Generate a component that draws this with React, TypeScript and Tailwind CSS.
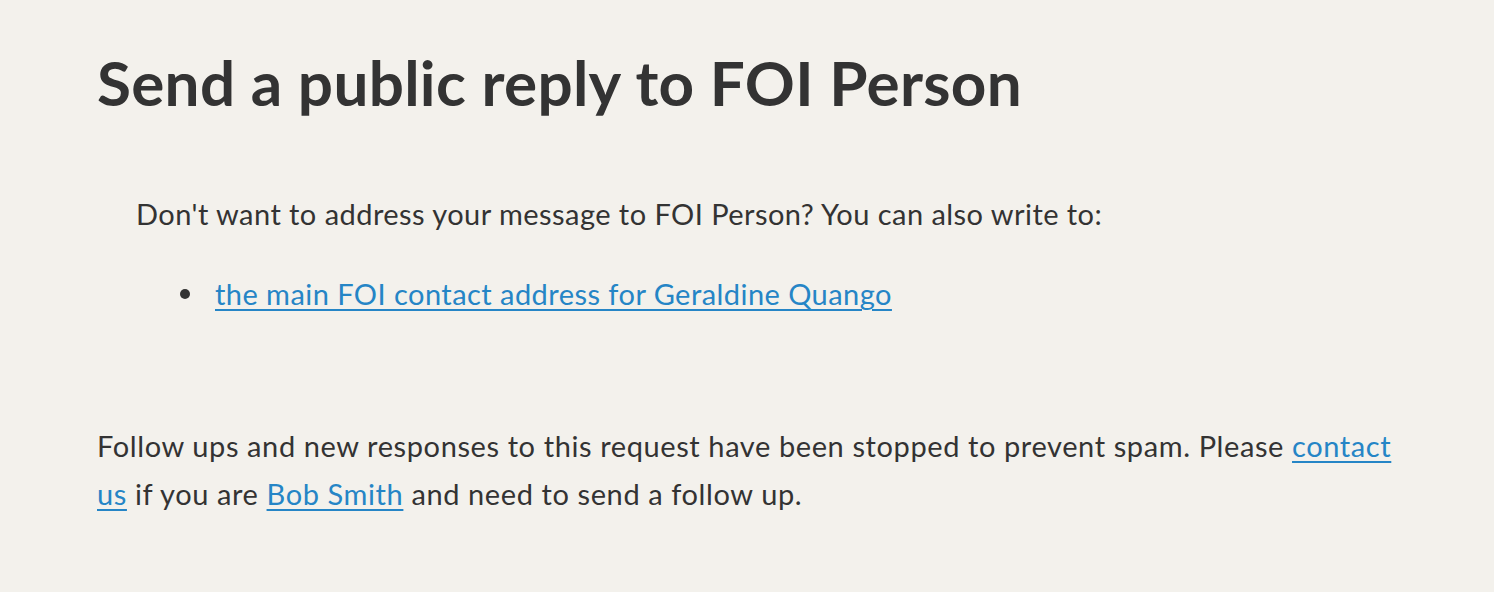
import React from 'react';

const linkCls = 'text-[#2585c6] underline decoration-[2px] underline-offset-[4px]';

const App: React.FC = () => {
  return (
    <div className="min-h-[592px] bg-[#f3f1ec] text-[#333333] font-['Lato',sans-serif]">
      <div className="px-[97px] pt-[45px]">
        {/* Titulo */}
        <h1 className="text-[62px] font-bold leading-[1.2] tracking-[0.3px]">Send a public reply to FOI Person</h1>

        <div className="mt-[71px] ml-[39px] text-[29px] leading-[48px] tracking-[0.45px]">
          <p>Don't want to address your message to FOI Person? You can also write to:</p>
          <ul className="mt-[32px] pl-[44px]">
            <li className="flex items-center">
              <span className="mr-[25px] h-[10px] w-[10px] shrink-0 rounded-full bg-[#333333]" />
              <a href="#" className={linkCls}>the main FOI contact address for Geraldine Quango</a>
            </li>
          </ul>
        </div>

        <p className="mt-[104px] max-w-[1320px] text-[29px] leading-[48px] tracking-[0.6px]">
          Follow ups and new responses to this request have been stopped to prevent spam. Please{' '}
          <a href="#" className={linkCls}>contact us</a> if you are{' '}
          <a href="#" className={linkCls}>Bob Smith</a> and need to send a follow up.
        </p>
      </div>
    </div>
  );
};

export default App;
